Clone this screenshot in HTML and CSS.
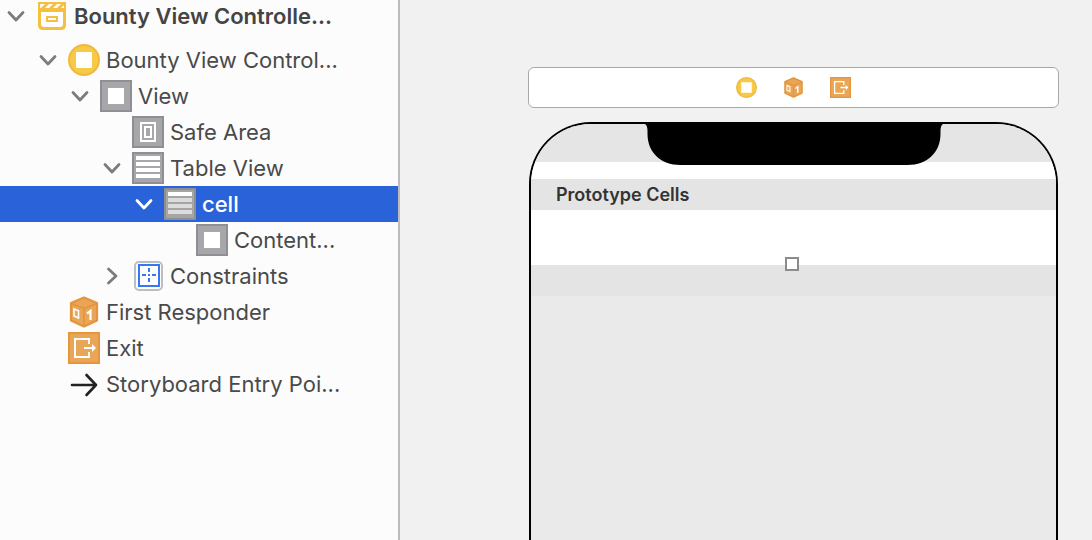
FILE: index.html
```html
<!DOCTYPE html>
<html lang="en">
<head>
<meta charset="utf-8">
<title>Storyboard</title>
<link rel="stylesheet" href="styles.css">
</head>
<body>
<svg class="defs" aria-hidden="true">
  <symbol id="chevron" viewBox="0 0 18 12"><path d="M2 2.500L9 10L16 2.500" fill="none" stroke="currentColor" stroke-width="2.800" stroke-linecap="round" stroke-linejoin="round"/></symbol>
  <symbol id="scene" viewBox="0 0 32 32"><path d="M2 2H30V25Q30 30 25 30H7Q2 30 2 25Z" fill="#f5bf42"/><path d="M4 4H9L5 8H4ZM13 4H17L13 8H9ZM21 4H25L21 8H17ZM28 5V8H25Z" fill="#fff"/><path d="M5 12H27V24Q27 27 24 27H8Q5 27 5 24Z" fill="#fff"/><path d="M11 17H21V21H11Z" fill="none" stroke="#f5bf42" stroke-width="2"/></symbol>
  <symbol id="controller" viewBox="0 0 32 32"><circle cx="16" cy="16" r="15" fill="#f6ca45" stroke="#f1b83e" stroke-width="2"/><path d="M8 8H24V24H8Z" fill="#fff"/></symbol>
  <symbol id="frame" viewBox="0 0 32 32"><path d="M1 1H31V31H1Z" fill="#a7a6aa" stroke="#8f8e93" stroke-width="2"/></symbol>
  <symbol id="view" viewBox="0 0 32 32"><use href="#frame"/><path d="M8 8H24V24H8Z" fill="#fff"/></symbol>
  <symbol id="safe" viewBox="0 0 32 32"><use href="#frame"/><path d="M9 7H23V25H9ZM13 11H19V21H13Z" fill="none" stroke="#fff" stroke-width="2"/></symbol>
  <symbol id="table" viewBox="0 0 32 32"><use href="#frame"/><path d="M4 4H28V8H4ZM4 10H28V14H4ZM4 16H28V20H4ZM4 22H28V26H4Z" fill="#fff"/></symbol>
  <symbol id="cell" viewBox="0 0 32 32"><path d="M1 1H31V31H1Z" fill="#a5a5a5" stroke="#8e8e8e" stroke-width="2"/><path d="M4 4H28V8H4Z" fill="#fff"/><path d="M4 10H28V14H4ZM4 16H28V20H4ZM4 22H28V26H4Z" fill="#dcdcdc"/></symbol>
  <symbol id="constraints" viewBox="0 0 32 32"><rect x="3" y="2" width="27" height="28" rx="4" fill="#fff" stroke="#bebebe" stroke-width="2"/><path d="M7 5H27V26H7Z" fill="#fff" stroke="#3478f6" stroke-width="2"/><path d="M17 8V12M17 14V16M17 18V22M10 15H14M16 15H18M20 15H24" stroke="#3478f6" stroke-width="2"/></symbol>
  <symbol id="cube" viewBox="0 0 32 32"><path d="M16 1.500L29 7V24.500L16 30.500L3 24.500V7Z" fill="#e9a658" stroke="#e5943a" stroke-width="2.200" stroke-linejoin="round"/><path d="M3 7.500L16 12.500L29 7.500M16 13V30" fill="none" stroke="#e5943a" stroke-width="1.600"/><path d="M6 13L10.500 14.800V22L6 20Z" fill="none" stroke="#fff" stroke-width="1.600"/><path d="M19 17.500L22.500 15V24" fill="none" stroke="#fff" stroke-width="2.200"/></symbol>
  <symbol id="exit" viewBox="0 0 32 32"><path d="M1 1H31V31H1Z" fill="#e9a656" stroke="#e6953a" stroke-width="2"/><path d="M21 12V7H7V25H21V20M16 16H26" fill="none" stroke="#fff" stroke-width="2"/><path d="M24 12L28 16L24 20Z" fill="#fff"/></symbol>
  <symbol id="entry" viewBox="0 0 32 32"><path d="M4 17H28M18.500 7L28 17L18.500 27" fill="none" stroke="#222" stroke-width="2.600" stroke-linecap="round" stroke-linejoin="round"/></symbol>
</svg>
<div class="editor">
  <nav class="outline" aria-label="Document outline">
    <ul class="tree">
      <li class="row scene"><button class="toggle" aria-label="Collapse scene" aria-expanded="true"><svg><use href="#chevron"/></svg></button><svg class="icon"><use href="#scene"/></svg><span>Bounty View Controlle...</span></li>
      <li class="row d1"><button class="toggle" aria-label="Collapse controller" aria-expanded="true"><svg><use href="#chevron"/></svg></button><svg class="icon"><use href="#controller"/></svg><span>Bounty View Control...</span></li>
      <li class="row d2"><button class="toggle" aria-label="Collapse view" aria-expanded="true"><svg><use href="#chevron"/></svg></button><svg class="icon"><use href="#view"/></svg><span>View</span></li>
      <li class="row d3 leaf"><svg class="icon"><use href="#safe"/></svg><span>Safe Area</span></li>
      <li class="row d3"><button class="toggle" aria-label="Collapse table view" aria-expanded="true"><svg><use href="#chevron"/></svg></button><svg class="icon"><use href="#table"/></svg><span>Table View</span></li>
      <li class="row d4 selected"><button class="toggle" aria-label="Collapse cell" aria-expanded="true"><svg><use href="#chevron"/></svg></button><svg class="icon"><use href="#cell"/></svg><span>cell</span></li>
      <li class="row d5 leaf"><svg class="icon"><use href="#view"/></svg><span>Content...</span></li>
      <li class="row d3"><button class="toggle closed" aria-label="Expand constraints" aria-expanded="false"><svg><use href="#chevron"/></svg></button><svg class="icon"><use href="#constraints"/></svg><span>Constraints</span></li>
      <li class="row d1 leaf"><svg class="icon"><use href="#cube"/></svg><span>First Responder</span></li>
      <li class="row d1 leaf"><svg class="icon"><use href="#exit"/></svg><span>Exit</span></li>
      <li class="row d1 leaf"><svg class="icon"><use href="#entry"/></svg><span>Storyboard Entry Poi...</span></li>
    </ul>
  </nav>
  <main class="canvas">
    <div class="dock">
      <button aria-label="View controller"><svg><use href="#controller"/></svg></button>
      <button aria-label="First responder"><svg><use href="#cube"/></svg></button>
      <button aria-label="Exit"><svg><use href="#exit"/></svg></button>
    </div>
    <section class="phone" aria-label="Device">
      <div class="status"></div>
      <svg class="notch" viewBox="0 0 307 43"><path d="M0 0V1C5 1 7 3 7 9V12C7 30 20 43 40 43H267C287 43 300 30 300 12V9C300 3 302 1 307 1V0Z"/></svg>
      <div class="gap"></div>
      <h2 class="header">Prototype Cells</h2>
      <div class="prototype"><span class="handle"></span></div>
      <div class="footer"></div>
    </section>
  </main>
</div>
</body>
</html>
```
FILE: styles.css
```css
* { box-sizing: border-box; }
body { margin: 0; font-family: Inter, "Liberation Sans", sans-serif; }
button { padding: 0; border: 0; background: none; color: inherit; }
.defs { position: absolute; width: 0; height: 0; }
.editor { display: flex; height: 100vh; overflow: hidden; }

.outline { flex: 0 0 400px; background: #fcfcfc; border-right: 2px solid #bcbcbc; overflow: hidden; }
.tree { list-style: none; margin: 0; padding: 0; }
.row { display: flex; align-items: center; height: 36px; padding-left: 6px; font-size: 22px; line-height: 32px; color: #4a4a4a; white-space: nowrap; }
.scene { height: 42px; padding-bottom: 10px; font-weight: 600; color: #444; }
.d1 { padding-left: 38px; }
.d2 { padding-left: 70px; }
.d3 { padding-left: 102px; }
.d4 { padding-left: 134px; }
.d5 { padding-left: 166px; }
.toggle { display: flex; align-items: center; justify-content: center; width: 20px; height: 32px; color: #7c7c7c; }
.toggle svg { width: 18px; height: 12px; }
.closed svg { transform: rotate(-90deg); }
.icon { flex: none; width: 32px; height: 32px; margin: 0 6px 0 10px; }
.leaf .icon { margin-left: 30px; }
.selected { background: #2962d9; color: #fff; font-weight: 500; }
.selected .toggle { color: #fff; }

.canvas { flex: 1; display: flex; flex-direction: column; padding: 67px 33px 0 128px; background: #f1f1f1; }
.dock { display: flex; align-items: center; justify-content: center; gap: 26px; height: 41px; border: 1px solid #a8a8a8; border-radius: 6px; background: #fff; }
.dock button, .dock svg { display: block; width: 21px; height: 21px; }
.phone { position: relative; flex: 1; margin: 14px 1px 0 1px; border: 2px solid #000; border-bottom: 0; border-radius: 62px 62px 0 0; background: #eaeaea; overflow: hidden; }
.status { height: 38px; background: #e5e5e5; }
.notch { position: absolute; top: -2px; left: 50%; width: 307px; height: 43px; transform: translateX(-50%); }
.gap { height: 17px; background: #fff; }
.header { margin: 0; padding-left: 25px; background: #e4e4e4; font-size: 18px; line-height: 31px; font-weight: 600; color: #333; }
.prototype { position: relative; height: 55px; background: #fff; }
.handle { position: absolute; left: 50%; bottom: -6px; width: 14px; height: 14px; margin-left: -9px; border: 2px solid #8c8c8c; background: #fff; }
.footer { height: 31px; background: #e4e4e4; }
```
